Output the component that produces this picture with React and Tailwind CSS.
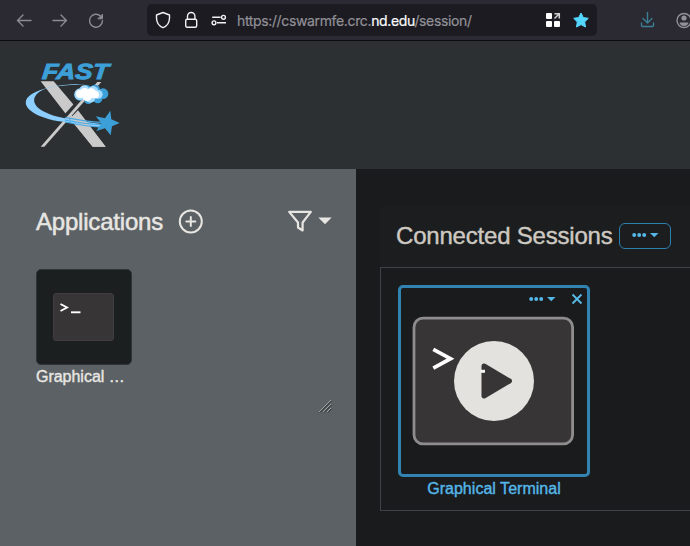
const sans = "font-['Liberation_Sans',Arial,sans-serif]";

function Logo() {
  return (
    <svg className="ml-[15px] mt-[9px] h-[118px] w-[120px]" viewBox="0 0 360 354">
      <text transform="translate(80 86.500) skewX(-5)" fill="#3d9fd7" stroke="#3d9fd7" strokeWidth="3" fontFamily="Liberation Sans, Arial, sans-serif" fontSize="66" fontWeight="700" fontStyle="italic" textLength="199" lengthAdjust="spacingAndGlyphs">FAST</text>
      <path d="M77 94H116L181 170L167 187L174 205H190L204 205L272 290H233L152 191Z" fill="#cacaca" />
      <path d="M194 155L148 207" stroke="#2c3032" strokeWidth="17" />
      <path d="M247 96H259L88 290H77Z" fill="#cacaca" />
      <path d="M166 205L189 181L272 290H233Z" fill="#cacaca" />
      <path d="M215 102C130 99 55 119 36 145C15 181 87 211 150 216C195 223 232 229 264 233L260 222C185 211 134 205 101 191C48 172 43 137 88 118C127 105 172 105 215 102Z" fill="#8bceff" />
      <path d="M164 205L176 193L200 207L270 214L268 232L205 225Z" fill="#cacaca" clipPath="url(#lowerArm)" />
      <clipPath id="lowerArm"><path d="M166 205L189 181L230 235H190Z" /></clipPath>
      <path d="M151 202C195 211 229 217 268 217M150 210C195 220 229 223 268 224M150 216C203 227 235 231 265 231" fill="none" stroke="#4aa9e2" strokeWidth="3.500" />
      <g fill="#3d9fd7"><circle cx="215" cy="118" r="13" /><circle cx="240" cy="119" r="15" /><circle cx="264" cy="131" r="16" /><circle cx="248" cy="146" r="14" /><circle cx="220" cy="149" r="13" /><circle cx="194" cy="136" r="16" /></g>
      <g fill="#a9dcff"><circle cx="208" cy="121" r="15" /><circle cx="234" cy="124" r="16" /><circle cx="250" cy="133" r="13" /><circle cx="226" cy="143" r="15" /><circle cx="196" cy="133" r="18" /></g>
      <g fill="#fff"><circle cx="209" cy="128" r="14" /><circle cx="229" cy="130" r="15" /><circle cx="241" cy="134" r="11" /><circle cx="216" cy="139" r="14" /><circle cx="195" cy="132" r="12" /></g>
      <path d="M286 182L289 208L314 219L291 229L287 256L270 235L244 243L259 219L242 199L270 205Z" fill="#3d9fd7" />
    </svg>
  );
}

function BrowserBar() {
  return (
    <div className="flex h-[41px] shrink-0 items-center border-b border-[#0c0c0d] bg-[#2b2a33]">
      <svg className="h-10 w-[147px] shrink-0" viewBox="0 0 147 40" fill="none" stroke="#8c8b91" strokeWidth="1.4" strokeLinecap="round" strokeLinejoin="round">
        <path d="M31 20.500H17.500M23 15l-5.500 5.500L23 26M53 20.500h13.500M61 15l5.500 5.500L61 26" />
        <path d="M100.500 16a6.500 6.500 0 1 0 2 4.800" />
        <path d="M102.500 14.500v4.300H98.200Z" fill="#8c8b91" strokeWidth="1" />
      </svg>
      <div className="flex h-8 w-[450px] shrink-0 items-center rounded-[5px] bg-[#1c1b22]">
        <svg className="h-8 w-[90px] shrink-0" viewBox="147 4 90 32" fill="none" stroke="#f1f1f3" strokeWidth="1.4" strokeLinejoin="round">
          <path d="M163 12.500L169.500 15V18C169.500 22 167 26 163 27.700C159 26 156.500 22 156.500 18V15Z" />
          <rect x="185.700" y="19.300" width="11" height="8" rx="1.500" />
          <path d="M187.500 19V16.200a3.700 3.700 0 0 1 7.400 0V19" />
          <path d="M212.200 17.300h8.500M217 22.800h9" />
          <circle cx="223.500" cy="17.300" r="1.900" />
          <circle cx="214" cy="22.800" r="1.900" />
        </svg>
        <div className="w-[308px] whitespace-nowrap pt-0.5 font-[Inter,sans-serif] text-[14px] leading-8 tracking-[-0.36px] text-[#919096] [-webkit-text-stroke:0.2px]">
          https://cswarmfe.crc.<span className="text-[#fbfbfe]">nd.edu</span>/session/
        </div>
        <svg className="h-8 w-[50px] shrink-0" viewBox="545 4 50 32" fill="#fff">
          <rect x="546" y="13" width="6" height="6" rx="1" />
          <rect x="546" y="21" width="6" height="6" rx="1" />
          <rect x="554" y="21" width="6" height="6" rx="1" />
          <path d="M554.500 13.700H559.300V18.500M559 14L554.500 18.500" fill="none" stroke="#d0d0d2" strokeWidth="1.500" />
          <path d="M581 13L583.300 17.600L588.300 18.300L584.700 21.900L585.500 27L581 24.600L576.500 27L577.300 21.900L573.700 18.300L578.700 17.600Z" fill="#54d7ff" stroke="#54d7ff" strokeLinejoin="round" />
        </svg>
      </div>
      <svg className="h-10 w-[93px] shrink-0" viewBox="597 0 93 40" fill="none" strokeLinecap="round" strokeLinejoin="round" strokeWidth="1.400">
        <path d="M647.500 12.500V22.500M643 18.500l4.500 4.500 4.500-4.500M641.500 23v2.500q0 1 1 1h10q1 0 1-1V23" stroke="#3a7f95" />
        <circle cx="684" cy="20.500" r="7" stroke="#929198" />
        <circle cx="684" cy="18" r="2.600" fill="#929198" />
        <path d="M679.500 22.500h9q-1 3.500-4.500 3.500t-4.500-3.500Z" fill="#929198" />
      </svg>
    </div>
  );
}

function Applications() {
  return (
    <aside className="w-[356px] shrink-0 bg-[#5b6164] pl-9 text-[#e8e6e3]">
      <div className="mt-[37px] flex h-8 items-center">
        <h1 className="w-[142px] whitespace-nowrap text-[24px] leading-8 tracking-[-0.2px] [-webkit-text-stroke:0.5px]">Applications</h1>
        <svg className="h-[26px] w-[26px]" viewBox="0 0 26 26" fill="none" stroke="currentColor" strokeWidth="2" strokeLinecap="round">
          <circle cx="12.800" cy="12.500" r="11" />
          <path d="M12.800 8v9M8.300 12.500h9" />
        </svg>
        <svg className="ml-[83px] h-8 w-[48px]" viewBox="287 205.500 48 32">
          <path d="M289.200 211.400H310.800L302.600 222V230L298 227V222Z" fill="none" stroke="currentColor" strokeWidth="2.200" strokeLinejoin="round" />
          <path d="M318.300 217H331.700L325 223.800Z" fill="currentColor" />
        </svg>
      </div>
      <div className="mt-[31px] h-24 w-24 rounded-[5px] border border-[#303638] bg-[#1b1f20] px-[16px] pt-[23px]">
        <div className="h-12 w-[61px] rounded-[3px] border border-[#413d3e] bg-[#383536]">
          <svg className="block h-11 w-[58px]" viewBox="0 0 58 44" fill="none" stroke="#fff" strokeWidth="1.900">
            <path d="M6.500 10L13 13.500L6.500 17" />
            <path d="M17 18.300h9.500" />
          </svg>
        </div>
      </div>
      <div className="mt-[2px] text-[16px] leading-[20px] tracking-[-0.02px] [-webkit-text-stroke:0.4px]">Graphical …</div>
      <svg className="ml-[282px] mt-[12px] h-4 w-4" viewBox="318 399 16 16" fill="none">
        <path d="M319 412L331 400M323 412L331 404M327 412L331 408" stroke="#a0a4a5" />
        <path d="M320 412.500L331.500 401M324 412.500L331.500 405M328 412.500L331.500 409" stroke="#292e30" />
      </svg>
    </aside>
  );
}

function Dots({ className }) {
  return (
    <svg className={className} viewBox="0 0 28 8" fill="#55b6e7">
      <circle cx="2.200" cy="4" r="2" /><circle cx="7.200" cy="4" r="2" /><circle cx="12.200" cy="4" r="2" />
      <path d="M18 2h8.500l-4.250 4.200Z" />
    </svg>
  );
}

function Sessions() {
  return (
    <main className="min-w-0 flex-1 bg-[#191b1c] pl-6 pt-[38px]">
      <div className="flex h-[60px] items-center bg-[#1b1d1e] pl-4">
        <h2 className="mt-[-2px] w-[223px] whitespace-nowrap text-[24px] leading-8 tracking-[-0.2px] text-[#cdc9c2] [-webkit-text-stroke:0.4px]">Connected Sessions</h2>
        <div className="mt-[-2px] flex h-[26px] w-[52px] items-center rounded-[6px] border border-[#2c80ad] pl-[12px] pb-[3px]"><Dots className="h-2 w-7" /></div>
      </div>
      <section className="h-[244px] border-y border-l border-[#3e4446] pl-[17px] pt-[17px]">
        <div className="h-48 w-48 rounded-[5px] border-[3px] border-[#3184b1] px-[11px]">
          <div className="flex h-[28px] items-center pl-[117px] pb-[6px]">
            <Dots className="h-2 w-7 shrink-0" />
            <svg className="ml-[14px] h-3 w-3 shrink-0" viewBox="0 0 12 12" stroke="#58b8e6" strokeWidth="1.900"><path d="M1.500 1.500l9 9M10.500 1.500l-9 9" /></svg>
          </div>
          <svg className="block h-[130px] w-[164px]" viewBox="412 316 164 130">
            <rect x="414" y="318.200" width="158.600" height="125.600" rx="9" fill="#383536" stroke="#8f8c8d" strokeWidth="2.800" />
            <path d="M433.300 349.300L450.500 358.700L433.300 368.200" fill="none" stroke="#fff" strokeWidth="3.800" />
            <circle cx="494" cy="381" r="40" fill="#e3e2de" />
            <path d="M484 366L509.500 381L484 396Z" fill="#383536" stroke="#383536" strokeWidth="5" strokeLinejoin="round" />
            <path d="M480.500 371.300h4.500" stroke="#f5f5f3" strokeWidth="3" />
          </svg>
        </div>
        <div className="mt-px w-48 whitespace-nowrap text-center text-[16px] leading-[22px] tracking-[0.03px] text-[#55b6e7] [-webkit-text-stroke:0.4px]">Graphical Terminal</div>
      </section>
    </main>
  );
}

export default function App() {
  return (
    <div className={`flex h-[546px] w-[690px] flex-col overflow-hidden ${sans}`}>
      <BrowserBar />
      <header className="h-[128px] shrink-0 bg-[#2c3032]"><Logo /></header>
      <div className="flex min-h-0 flex-1"><Applications /><Sessions /></div>
    </div>
  );
}
